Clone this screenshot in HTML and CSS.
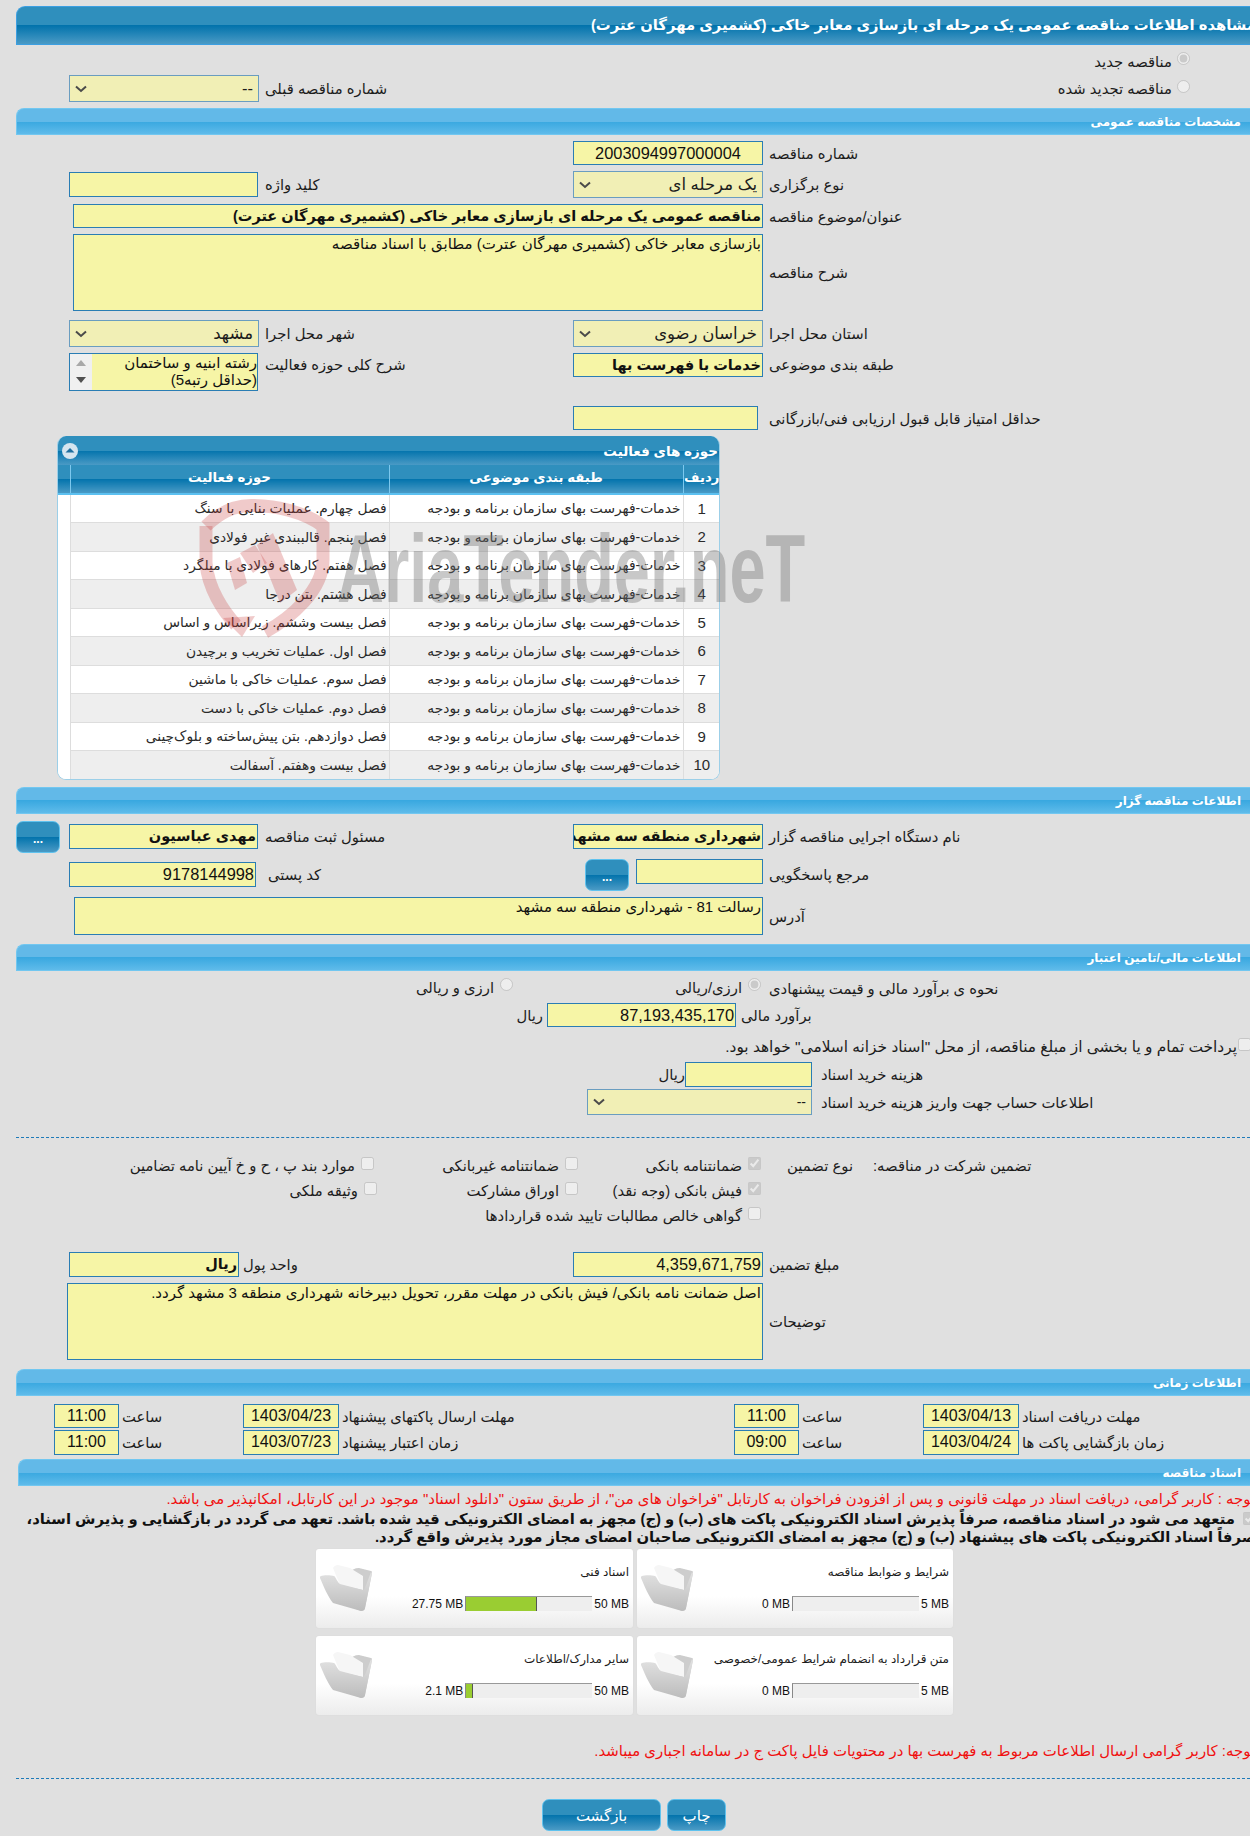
FILE: index.html
```html
<!DOCTYPE html>
<html lang="fa">
<head>
<meta charset="utf-8">
<title>مشاهده اطلاعات مناقصه</title>
<link rel="stylesheet" href="styles.css">
</head>
<body>
<div class="page">
  <div class="title"><span>مشاهده اطلاعات مناقصه عمومی یک مرحله ای بازسازی معابر خاکی (کشمیری مهرگان عترت)</span></div>

  <div class="radio-line mt4"><input type="radio" class="rad" disabled checked><span>مناقصه جدید</span></div>
  <div class="row mt2 h27">
    <div class="radio-line radio-in"><input type="radio" class="rad" disabled><span>مناقصه تجدید شده</span></div>
    <div></div>
    <div class="lbl">شماره مناقصه قبلی</div>
    <div class="sel"><span>--</span><svg class="chev" viewBox="0 0 12 8"><path d="M1 1.5 6 6l5-4.5" fill="none" stroke="#4a4a4a" stroke-width="2"/></svg></div>
  </div>

  <div class="sec mt6">مشخصات مناقصه عمومی</div>

  <div class="row mt6 h24">
    <div class="lbl">شماره مناقصه</div>
    <div class="fld center num">2003094997000004</div>
  </div>
  <div class="row mt6 h27">
    <div class="lbl">نوع برگزاری</div>
    <div class="sel"><span>یک مرحله ای</span><svg class="chev" viewBox="0 0 12 8"><path d="M1 1.5 6 6l5-4.5" fill="none" stroke="#4a4a4a" stroke-width="2"/></svg></div>
    <div class="lbl">کلید واژه</div>
    <div class="fld fld-inset"></div>
  </div>
  <div class="row mt6 h24">
    <div class="lbl">عنوان/موضوع مناقصه</div>
    <div class="fld w690 strong span-rest">مناقصه عمومی یک مرحله ای بازسازی معابر خاکی (کشمیری مهرگان عترت)</div>
  </div>
  <div class="row mt6 h77">
    <div class="lbl">شرح مناقصه</div>
    <div class="fld area w690 span-rest">بازسازی معابر خاکی (کشمیری مهرگان عترت) مطابق با اسناد مناقصه</div>
  </div>
  <div class="row mt9 h27">
    <div class="lbl">استان محل اجرا</div>
    <div class="sel"><span>خراسان رضوی</span><svg class="chev" viewBox="0 0 12 8"><path d="M1 1.5 6 6l5-4.5" fill="none" stroke="#4a4a4a" stroke-width="2"/></svg></div>
    <div class="lbl">شهر محل اجرا</div>
    <div class="sel"><span>مشهد</span><svg class="chev" viewBox="0 0 12 8"><path d="M1 1.5 6 6l5-4.5" fill="none" stroke="#4a4a4a" stroke-width="2"/></svg></div>
  </div>
  <div class="row mt6 h38">
    <div class="lbl lbl-top">طبقه بندی موضوعی</div>
    <div class="fld h24 strong">خدمات با فهرست بها</div>
    <div class="lbl lbl-top">شرح کلی حوزه فعالیت</div>
    <div class="fld area scroll-area">
      <div class="scroll-text">رشته ابنیه و ساختمان (حداقل رتبه5)</div>
      <div class="scrollbar"><i class="up"></i><i class="down"></i></div>
    </div>
  </div>
  <div class="row mt15 h24">
    <div class="lbl">حداقل امتیاز قابل قبول ارزیابی فنی/بازرگانی</div>
    <div class="fld shift5"></div>
  </div>

  <div class="panel mt6">
    <div class="panel-clip">
      <div class="panel-head">
        <span>حوزه های فعالیت</span>
        <svg class="collapse" viewBox="0 0 16 16"><circle cx="8" cy="8" r="8" fill="#d5e5ef"/><path d="M3.5 9.5 8 5l4.5 4.5z" fill="#1f6f9f"/></svg>
      </div>
      <table class="grid">
        <thead>
          <tr><th class="c1">ردیف</th><th class="c2">طبقه بندی موضوعی</th><th class="c3">حوزه فعالیت</th><th class="c4"></th></tr>
        </thead>
        <tbody>
          <tr><td class="c1">1</td><td>خدمات-فهرست بهای سازمان برنامه و بودجه</td><td>فصل چهارم. عملیات بنایی با سنگ</td><td class="c4"></td></tr>
          <tr><td class="c1">2</td><td>خدمات-فهرست بهای سازمان برنامه و بودجه</td><td>فصل پنجم. قالببندی غیر فولادی</td><td class="c4"></td></tr>
          <tr><td class="c1">3</td><td>خدمات-فهرست بهای سازمان برنامه و بودجه</td><td>فصل هفتم. کارهای فولادی با میلگرد</td><td class="c4"></td></tr>
          <tr><td class="c1">4</td><td>خدمات-فهرست بهای سازمان برنامه و بودجه</td><td>فصل هشتم. بتن درجا</td><td class="c4"></td></tr>
          <tr><td class="c1">5</td><td>خدمات-فهرست بهای سازمان برنامه و بودجه</td><td>فصل بیست وششم. زیراساس و اساس</td><td class="c4"></td></tr>
          <tr><td class="c1">6</td><td>خدمات-فهرست بهای سازمان برنامه و بودجه</td><td>فصل اول. عملیات تخریب و برچیدن</td><td class="c4"></td></tr>
          <tr><td class="c1">7</td><td>خدمات-فهرست بهای سازمان برنامه و بودجه</td><td>فصل سوم. عملیات خاکی با ماشین</td><td class="c4"></td></tr>
          <tr><td class="c1">8</td><td>خدمات-فهرست بهای سازمان برنامه و بودجه</td><td>فصل دوم. عملیات خاکی با دست</td><td class="c4"></td></tr>
          <tr><td class="c1">9</td><td>خدمات-فهرست بهای سازمان برنامه و بودجه</td><td>فصل دوازدهم. بتن پیش‌ساخته و بلوک‌چینی</td><td class="c4"></td></tr>
          <tr><td class="c1">10</td><td>خدمات-فهرست بهای سازمان برنامه و بودجه</td><td>فصل بیست وهفتم. آسفالت</td><td class="c4"></td></tr>
        </tbody>
      </table>
    </div>
    <svg class="wm-shield" viewBox="0 0 131 147">
      <g fill="none" stroke="#c83c3c" stroke-opacity=".27" stroke-width="13">
        <path d="M7 28V65C9 90 24 113 37 127"/>
        <path d="M7 28C20 15 35 7.5 52 7.5 78 7.5 105 14 124 28V62C124 92 92 120 66 134"/>
      </g>
      <g fill="#c83c3c" fill-opacity=".27">
        <path d="M24 120 56 118 43 139z"/>
        <path d="M58 47 74 35 98 92 81 105z"/>
        <path d="M41 55 56 47 68 65 54 75z"/>
        <path d="M28 65 41 59 48 85 36 92z"/>
      </g>
    </svg>
    <div class="wm-text">AriaTender.neT</div>
  </div>

  <div class="sec mt7">اطلاعات مناقصه گزار</div>

  <div class="row mt7 h32">
    <div class="lbl lbl-h31">نام دستگاه اجرایی مناقصه گزار</div>
    <div class="fld h25 mt3 strong">شهرداری منطقه سه مشهد</div>
    <div class="lbl lbl-h31">مسئول ثبت مناقصه</div>
    <div class="fld h25 mt3 strong fld-inset">مهدی عباسیون</div>
    <div class="btn dots dots-far">...</div>
  </div>
  <div class="row mt6 h32">
    <div class="lbl lbl-h31">مرجع پاسخگویی</div>
    <div class="ref-wrap"><div class="fld h25 w127"></div><div class="btn dots">...</div></div>
    <div class="lbl lbl-h31 lbl-p7">کد پستی</div>
    <div class="fld h25 mt3 postal num">9178144998</div>
  </div>
  <div class="row mt6 h38">
    <div class="lbl">آدرس</div>
    <div class="fld area w689 span-rest">رسالت 81 - شهرداری منطقه سه مشهد</div>
  </div>

  <div class="sec mt9">اطلاعات مالی/تامین اعتبار</div>

  <div class="method mt2">
    <div class="lbl">نحوه ی برآورد مالی و قیمت پیشنهادی</div>
    <div class="opt"><input type="radio" class="rad" disabled checked><span>ارزی/ریالی</span></div>
    <div class="opt"><input type="radio" class="rad" disabled><span>ارزی و ریالی</span></div>
  </div>
  <div class="estimate mt2">
    <div class="lbl">برآورد مالی</div>
    <div class="fld num">87,193,435,170</div>
    <div class="lbl unit">ریال</div>
  </div>
  <div class="treasury mt5"><input type="checkbox" class="chk" disabled><span>پرداخت تمام و یا بخشی از مبلغ مناقصه، از محل "اسناد خزانه اسلامی" خواهد بود.</span></div>
  <div class="cost">
    <div class="lbl">هزینه خرید اسناد</div>
    <div class="fld"></div>
    <div class="lbl">ریال</div>
  </div>
  <div class="account mt2">
    <div class="lbl">اطلاعات حساب جهت واریز هزینه خرید اسناد</div>
    <div class="sel"><span>--</span><svg class="chev" viewBox="0 0 12 8"><path d="M1 1.5 6 6l5-4.5" fill="none" stroke="#4a4a4a" stroke-width="2"/></svg></div>
  </div>

  <div class="dash mt22"></div>

  <div class="guar mt14">
    <div class="lbl">تضمین شرکت در مناقصه:</div>
    <div class="g-type">نوع تضمین</div>
    <div class="opt"><input type="checkbox" class="chk" disabled checked><span>ضمانتنامه بانکی</span></div>
    <div class="opt"><input type="checkbox" class="chk" disabled><span>ضمانتنامه غیربانکی</span></div>
    <div class="opt"><input type="checkbox" class="chk" disabled><span>موارد بند پ ، ح و خ آیین نامه تضامین</span></div>
    <div></div><div></div>
    <div class="opt"><input type="checkbox" class="chk" disabled checked><span>فیش بانکی (وجه نقد)</span></div>
    <div class="opt"><input type="checkbox" class="chk" disabled><span>اوراق مشارکت</span></div>
    <div class="opt nudge3"><input type="checkbox" class="chk" disabled><span>وثیقه ملکی</span></div>
    <div></div><div></div>
    <div class="opt g-wide"><input type="checkbox" class="chk" disabled><span>گواهی خالص مطالبات تایید شده قراردادها</span></div>
  </div>

  <div class="row row-unit mt26 h25">
    <div class="lbl">مبلغ تضمین</div>
    <div class="fld num">4,359,671,759</div>
    <div class="lbl lbl-unit">واحد پول</div>
    <div class="fld strong">ریال</div>
  </div>
  <div class="row mt6 h77">
    <div class="lbl">توضیحات</div>
    <div class="fld area w696 span-rest">اصل ضمانت نامه بانکی/ فیش بانکی در مهلت مقرر، تحویل دبیرخانه شهرداری منطقه 3 مشهد گردد.</div>
  </div>

  <div class="sec mt9">اطلاعات زمانی</div>

  <div class="times mt8 h24">
    <div class="lbl">مهلت دریافت اسناد</div><div class="fld center">1403/04/13</div>
    <div class="lbl">ساعت</div><div class="fld center">11:00</div>
    <div class="lbl">مهلت ارسال پاکتهای پیشنهاد</div><div class="fld center">1403/04/23</div>
    <div class="lbl">ساعت</div><div class="fld center">11:00</div>
  </div>
  <div class="times mt2 h25">
    <div class="lbl">زمان بازگشایی پاکت ها</div><div class="fld center">1403/04/24</div>
    <div class="lbl">ساعت</div><div class="fld center">09:00</div>
    <div class="lbl">زمان اعتبار پیشنهاد</div><div class="fld center">1403/07/23</div>
    <div class="lbl">ساعت</div><div class="fld center">11:00</div>
  </div>

  <div class="sec sec-docs mt4">اسناد مناقصه</div>
  <div class="note mt3">توجه : کاربر گرامی، دریافت اسناد در مهلت قانونی و پس از افزودن فراخوان به کارتابل "فراخوان های من"، از طریق ستون "دانلود اسناد" موجود در این کارتابل، امکانپذیر می باشد.</div>
  <div class="pledge"><input type="checkbox" class="chk" disabled checked> متعهد می شود در اسناد مناقصه، صرفاً پذیرش اسناد الکترونیکی پاکت های (ب) و (ج) مجهز به امضای الکترونیکی قید شده باشد. تعهد می گردد در بازگشایی و پذیرش اسناد،<br>صرفاً اسناد الکترونیکی پاکت های پیشنهاد (ب) و (ج) مجهز به امضای الکترونیکی صاحبان امضای مجاز مورد پذیرش واقع گردد.</div>

  <div class="cards">
    <div class="card">
      <div class="card-body">
        <div class="card-title">شرایط و ضوابط مناقصه</div>
        <div class="meter"><span>5 MB</span><div class="bar"></div><span>0 MB</span></div>
      </div>
      <svg class="folder" viewBox="0 0 52 46"><use href="#folder-shape"/></svg>
    </div>
    <div class="card">
      <div class="card-body">
        <div class="card-title">اسناد فنی</div>
        <div class="meter"><span>50 MB</span><div class="bar"><i class="fill fill-a"></i></div><span>27.75 MB</span></div>
      </div>
      <svg class="folder" viewBox="0 0 52 46"><use href="#folder-shape"/></svg>
    </div>
    <div class="card">
      <div class="card-body">
        <div class="card-title">متن قرارداد به انضمام شرایط عمومی/خصوصی</div>
        <div class="meter"><span>5 MB</span><div class="bar"></div><span>0 MB</span></div>
      </div>
      <svg class="folder" viewBox="0 0 52 46"><use href="#folder-shape"/></svg>
    </div>
    <div class="card">
      <div class="card-body">
        <div class="card-title">سایر مدارک/اطلاعات</div>
        <div class="meter"><span>50 MB</span><div class="bar"><i class="fill fill-b"></i></div><span>2.1 MB</span></div>
      </div>
      <svg class="folder" viewBox="0 0 52 46"><use href="#folder-shape"/></svg>
    </div>
  </div>

  <div class="note note2">توجه: کاربر گرامی ارسال اطلاعات مربوط به فهرست بها در محتویات فایل پاکت ج در سامانه اجباری میباشد.</div>
  <div class="dash mt17"></div>

  <div class="actions">
    <div class="btn act act-print">چاپ</div>
    <div class="btn act act-back">بازگشت</div>
  </div>
</div>

<svg class="defs" aria-hidden="true">
  <defs>
    <linearGradient id="fg" x1="0" y1="0" x2="0" y2="1"><stop offset="0" stop-color="#e2e2e2"/><stop offset="1" stop-color="#bcbcbc"/></linearGradient>
    <g id="folder-shape">
      <path d="M15 5 28 8c3-3 7-5 11-5l12 3c1 0 1 1 1 2l-7 35c0 2-2 3-4 3l-5-2z" fill="#cdcdcd"/>
      <path d="M13 3c1-2 3-3 5-3l12 3 13 8v14L20 20z" fill="#f6f6f6"/>
      <path d="M1 11c2-1 10-1 13 0 2 1 3 6 6 8l23 6c2 0 4-8 8-18l1 1-7 35c0 2-2 3-4 3L13 38C8 32 3 20 0 13c0-1 0-2 1-2z" fill="url(#fg)"/>
    </g>
  </defs>
</svg>
</body>
</html>
```

FILE: styles.css
```css
* { box-sizing: border-box; }
html, body { margin: 0; padding: 0; width: 1250px; height: 1836px; overflow: hidden; background: #e0e0e0; }
body { font-family: "Liberation Sans", "DejaVu Sans", sans-serif; font-size: 14.8px; color: #1c1c1c; padding-top: 6px; }
.page { direction: rtl; margin-left: 16px; width: 1234px; position: relative; }
.defs { position: absolute; width: 0; height: 0; }

.mt2 { margin-top: 2px; } .mt3 { margin-top: 3px; } .mt4 { margin-top: 4px; } .mt5 { margin-top: 5px; }
.mt6 { margin-top: 6px; } .mt7 { margin-top: 7px; } .mt8 { margin-top: 8px; } .mt9 { margin-top: 9px; }
.mt14 { margin-top: 14px; } .mt15 { margin-top: 15px; } .mt17 { margin-top: 17px; } .mt22 { margin-top: 22px; } .mt26 { margin-top: 26px; }
.h24 { height: 24px; } .h25 { height: 25px; } .h27 { height: 27px; } .h32 { height: 32px; }
.h38 { height: 38px; } .h77 { height: 77px; }

.title { height: 39px; border: 1px solid #3c9fe2; border-right: 0; border-top-left-radius: 9px; color: #fff;
  background: linear-gradient(#2f8fbd 0, #2f8fbd 50%, #0273ac 50%, #4a9ac5 100%);
  font-weight: bold; font-size: 14.8px; line-height: 36px; white-space: nowrap; overflow: hidden; }
.title span { display: block; margin-right: -6px; }

.sec { height: 27px; border-top: 1px solid #72c7f0; border-bottom: 1px solid #72c7f0; border-left: 1px solid #72c7f0; border-top-left-radius: 8px;
  background: linear-gradient(#62b9e8 0, #62b9e8 50%, #39a8e0 50%, #5fbbea 100%);
  color: #fff; font-weight: bold; font-size: 12px; line-height: 26px; padding-right: 9px; white-space: nowrap; }
.sec-docs { margin-left: 2px; }

.row { display: grid; grid-template-columns: 487px 190px 314px 190px 53px; align-items: start; }
.row-unit { grid-template-columns: 487px 190px 334px 170px 53px; }
.row > * { min-width: 0; }
.lbl { align-self: stretch; display: flex; align-items: center; justify-content: flex-end; padding-left: 6px; white-space: nowrap; }
.lbl-top { height: 22px; align-self: start; }
.lbl-h31 { height: 31px; align-self: start; }
.lbl-p7 { padding-left: 9px; }

.fld { height: 100%; border: 1px solid #2a7db4; background: #f6f5a6; color: #111; font-size: 15px; line-height: 22px; padding: 0 1px; white-space: nowrap; overflow: hidden; }
.fld.h24 { height: 24px; } .fld.h25 { height: 25px; }
.fld-inset { margin: 1px 1px 0 0; height: calc(100% - 2px); width: 189px; }
.fld.h25.fld-inset { margin-top: 3px; height: 25px; }
.center { text-align: center; }
.num { font-size: 16.4px; }
.strong { font-weight: bold; font-size: 14.5px; }
.area { white-space: normal; font-size: 15px; line-height: 18px; }
.w690 { width: 690px; } .w689 { width: 689px; } .w696 { width: 696px; } .w127 { width: 127px; flex: none; }
.span-rest { grid-column: 2 / 6; }
.shift5 { margin-right: 5px; }
.postal { margin-right: 3px; width: 187px; }
.lbl-unit { padding-left: 4px; }

.scroll-area { display: flex; height: 38px; margin-right: 1px; width: 189px; padding: 0; line-height: 17px; }
.scroll-text { flex: 1; min-width: 0; }
.scrollbar { flex: none; width: 22px; background: #f0f0f0; position: relative; }
.scrollbar i { position: absolute; left: 6px; width: 0; height: 0; border-left: 5px solid transparent; border-right: 5px solid transparent; }
.scrollbar .up { top: 6px; border-bottom: 6px solid #a8a8a8; }
.scrollbar .down { top: 23px; border-top: 6px solid #505050; }

.sel { height: 100%; border: 1px solid #6a9dc0; background: #f1efb5; padding: 0 5px 0 0; font-size: 16.5px; display: flex; align-items: center; justify-content: space-between; }
.chev { width: 12px; height: 8px; margin-left: 5px; flex: none; }

.radio-line { display: flex; align-items: center; gap: 5px; padding-right: 60px; height: 24px; white-space: nowrap; }
.radio-in { height: 27px; padding-right: 60px; }
.rad, .chk { width: 13px; height: 13px; margin: 0; flex: none; }
.rad { margin-top: -5px; }
.chk { margin-top: -5px; }

.panel { position: relative; margin-right: 530px; height: 344px; width: 663px; }
.panel-clip { height: 344px; border: 1px solid #9ccfe8; border-top: 0; border-radius: 9px; background: #fff; overflow: hidden; }
.panel-head { height: 29px; margin: 0 -1px; display: flex; justify-content: space-between; align-items: center; padding: 0 2px 0 5px;
  color: #fff; font-weight: bold; font-size: 13.5px; background: linear-gradient(#2f8fbd 0, #2f8fbd 50%, #0273ac 50%, #4a9ac5 100%); }
.collapse { width: 16px; height: 16px; }
.grid { width: 663px; margin: 0 -1px; border-collapse: collapse; table-layout: fixed; }
.grid th { height: 29px; padding: 0 0 3px; color: #fff; font-weight: bold; font-size: 13.3px; border-left: 1px solid #7cc8ee; border-bottom: 2px solid #5cc0f0;
  background: linear-gradient(#2f8fbd 0, #2f8fbd 50%, #0273ac 50%, #4a9ac5 100%); }
.grid td { height: 28px; padding: 0 2px; font-size: 13.8px; color: #2a2a2a; border-left: 1px solid #ddd; border-bottom: 1px solid #ddd; white-space: nowrap; overflow: hidden; }
.grid tr:nth-child(even) td { height: 29px; background: #eee; }
.grid td.c1 { text-align: center; font-size: 15px; }
.c1 { width: 37px; } .c2 { width: 294px; } .c3 { width: 319px; } .c4 { width: 13px; }
.grid th.c4 { border-left: 0; }
.grid td.c4, .grid tr:nth-child(even) td.c4 { background: #fff; border: 0; }
.wm-shield { position: absolute; left: 142px; top: 62px; width: 131px; height: 147px; pointer-events: none; }
.wm-text { position: absolute; direction: ltr; left: 280px; top: 83px; font-size: 97px; line-height: 100px; font-weight: bold; color: rgba(110,110,110,.38); white-space: nowrap; transform: scaleX(.67); transform-origin: left top; pointer-events: none; }

.btn { border: 1px solid #5fc2ee; border-radius: 7px; color: #fff; background: linear-gradient(#2f8fbd 0, #2f8fbd 50%, #0273ac 50%, #4a9ac5 100%); text-align: center; }
.dots { width: 44px; height: 32px; font-weight: bold; font-size: 12px; line-height: 34px; flex: none; }
.dots-far { margin-right: 9px; }
.ref-wrap { display: flex; gap: 7px; }

.method { display: grid; grid-template-columns: 489px 248px 1fr; height: 28px; }
.method .lbl { padding-left: 8px; padding-top: 2px; }
.opt { display: flex; align-items: center; gap: 6px; white-space: nowrap; }
.nudge3 { margin-right: -3px; }
.estimate { display: grid; grid-template-columns: 514px 189px auto; justify-content: start; height: 24px; }
.estimate .lbl { padding-left: 5px; }
.unit { padding-left: 0; padding-right: 4px; }
.treasury { display: flex; gap: 1px; align-items: center; height: 30px; margin-right: -1px; white-space: nowrap; font-size: 15.4px; }
.cost { display: grid; grid-template-columns: 438px 127px auto; justify-content: start; height: 25px; }
.cost .lbl:first-child { padding-left: 9px; }
.cost .lbl:last-child { padding: 0; }
.account { display: grid; grid-template-columns: 438px 225px; justify-content: start; height: 26px; }
.account .lbl { padding-left: 9px; }
.account .sel { font-size: 14px; }

.dash { height: 0; border-top: 1px dashed #1e7ab8; }

.guar { display: grid; grid-template-columns: 377px 112px 183px 204px 1fr; grid-auto-rows: 25px; height: 74px; padding-top: 1px; }
.guar .lbl { padding-left: 0; }
.g-type { padding-right: 20px; display: flex; align-items: center; white-space: nowrap; }

.times { display: grid; grid-template-columns: 231px 96px 124px 65px 395px 96px 124px 65px; }
.times .lbl { padding-left: 3px; }
.times .fld { font-size: 16px; }

.note { color: #f01010; font-size: 14.9px; line-height: 20px; white-space: nowrap; margin-right: -5px; }
.note2 { margin-top: 26px; }
.pledge { font-weight: bold; color: #111; font-size: 14.8px; line-height: 18px; white-space: nowrap; margin: 1px -6px 0 0; }
.pledge .chk { margin: 0 0 0 4px; vertical-align: -1px; }

.cards { display: grid; grid-template-columns: 316px 317px; gap: 8px 4px; margin: 3px 297px 0 0; }
.card { height: 79px; display: flex; justify-content: space-between; border-radius: 3px; padding: 0 4px; background: linear-gradient(#fff 0, #fff 60%, #ececec 100%); box-shadow: 0 0 1px #ccc; }
.card-title { font-size: 12px; height: 47px; padding-top: 16px; white-space: nowrap; }
.meter { display: flex; align-items: center; gap: 2px; height: 15px; font-size: 12px; color: #111; }
.meter span { direction: ltr; }
.bar { width: 127px; height: 15px; direction: ltr; background: #eee; border-top: 1px solid #999; border-left: 1px solid #888; }
.fill { display: block; height: 100%; background: #9acd32; border-right: 1px solid #555; }
.fill-a { width: 71px; } .fill-b { width: 7px; }
.folder { width: 52px; height: 46px; margin-top: 16px; flex: none; }

.actions { display: flex; gap: 6px; margin: 20px 524px 0 0; }
.act { height: 32px; font-size: 15px; line-height: 32px; }
.act-print { width: 59px; }
.act-back { width: 119px; }
```
